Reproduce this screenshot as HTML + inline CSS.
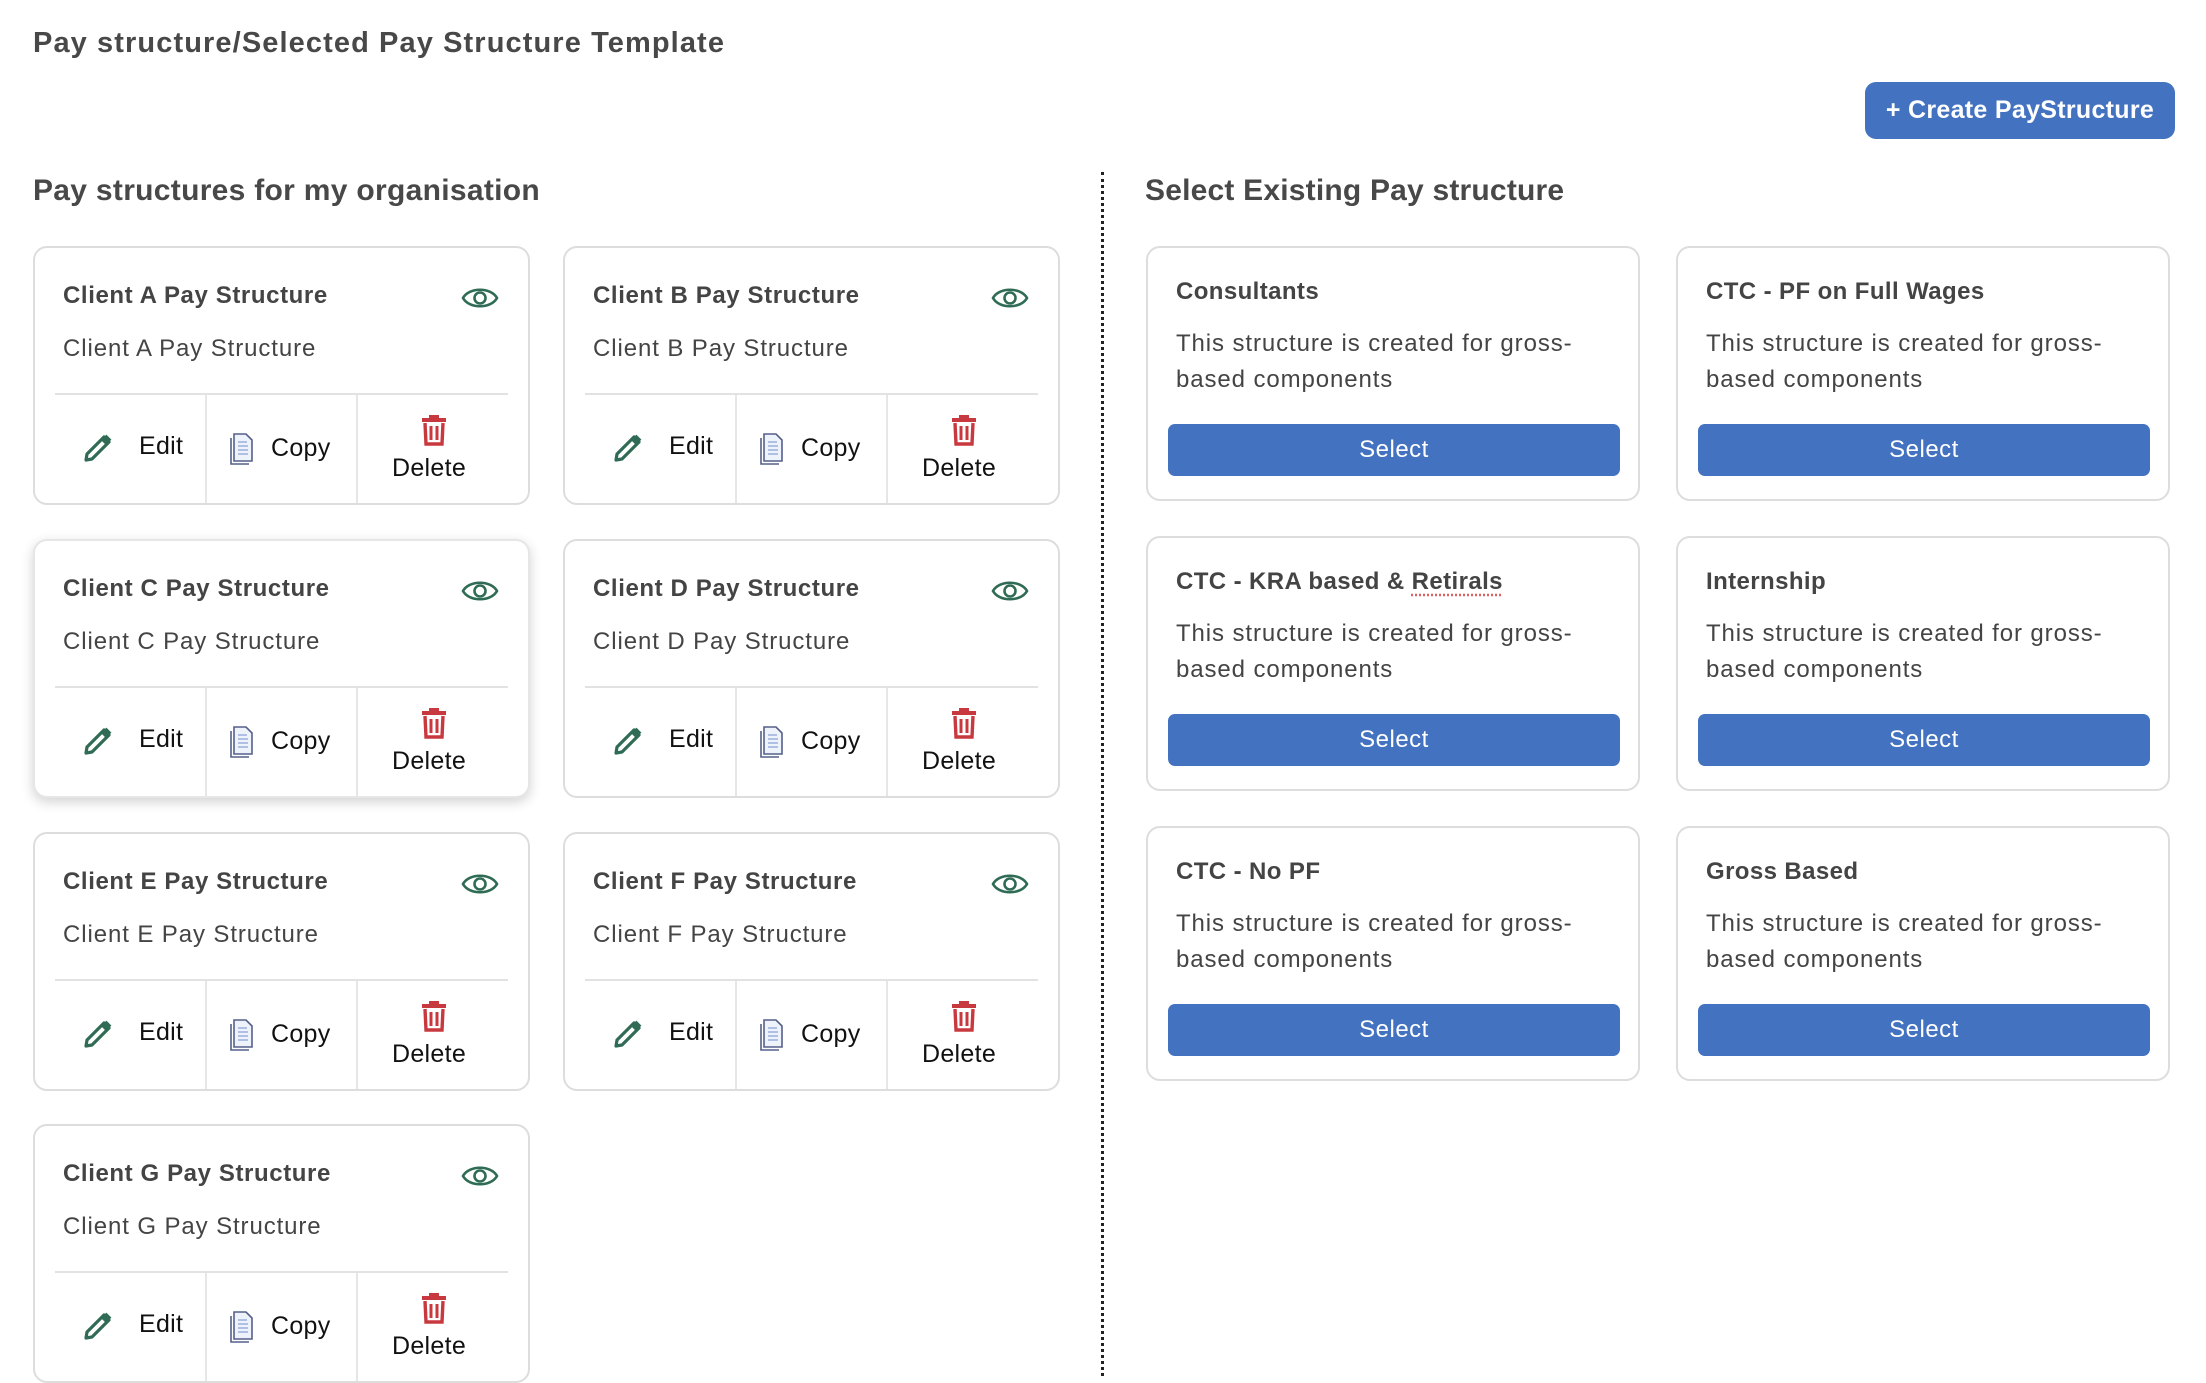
<!DOCTYPE html>
<html><head><meta charset="utf-8"><style>
*{box-sizing:border-box;margin:0;padding:0}
body{width:2206px;height:1376px;overflow:hidden;background:#fff;font-family:"Liberation Sans",sans-serif;position:relative;color:#444}
.h{position:absolute;font-weight:bold;color:#484848}
.btn{position:absolute;left:1865px;top:82px;width:310px;height:57px;background:#4272c0;border-radius:11px;color:#fff;font-size:25px;font-weight:bold;display:flex;align-items:center;justify-content:center;letter-spacing:0.3px}
.vl{position:absolute;left:1101px;top:172px;height:1204px;border-left:3px dotted #222}
.card{position:absolute;width:497px;height:259px;border:2px solid #ddd;border-radius:14px;background:#fff}
.card.sh{box-shadow:0 4px 12px rgba(0,0,0,.18);border-color:#e6e6e6}
.ct{position:absolute;left:28px;top:34px;font-size:24px;font-weight:bold;color:#444;letter-spacing:0.6px}
.cs{position:absolute;left:28px;top:87px;font-size:24px;color:#444;letter-spacing:0.9px}
.eye{position:absolute;left:426px;top:36px}
.div{position:absolute;left:20px;right:20px;top:145px;border-top:2px solid #e2e2e2}
.c1,.c2{position:absolute;top:147px;bottom:0;border-left:2px solid #e6e6e6}
.c1{left:170px}.c2{left:321px}
.act{position:absolute;font-size:25px;color:#111;letter-spacing:0.3px}
.rc{position:absolute;width:494px;height:255px;border:2px solid #ddd;border-radius:14px;background:#fff}
.rt{position:absolute;left:28px;top:30px;font-size:24px;font-weight:bold;color:#444;letter-spacing:0.4px}
.rd{position:absolute;left:28px;top:78px;font-size:24px;line-height:36px;color:#444;width:430px;letter-spacing:0.9px}
.sel{position:absolute;left:20px;top:176px;width:452px;height:52px;background:#4272c0;border-radius:7px;color:#fff;font-size:24px;display:flex;align-items:center;justify-content:center;letter-spacing:0.5px}
</style></head><body>
<div class="h" style="left:33px;top:27px;font-size:29px;letter-spacing:1.1px">Pay structure/Selected Pay Structure Template</div>
<div class="btn">+ Create PayStructure</div>
<div class="h" style="left:33px;top:174px;font-size:30px;letter-spacing:0.3px">Pay structures for my organisation</div>
<div class="h" style="left:1145px;top:174px;font-size:30px;letter-spacing:0.2px">Select Existing Pay structure</div>
<div class="vl"></div>

<div id="L"></div>
<script>
var L=[["A",33,246],["B",563,246],["C",33,539,1],["D",563,539],["E",33,832],["F",563,832],["G",33,1124]];
var eye='<svg width="38" height="28" viewBox="0 0 38 28"><path d="M2 14 C8 3 30 3 36 14 C30 25 8 25 2 14Z" fill="none" stroke="#2f6b55" stroke-width="2.6"/><circle cx="19" cy="14" r="5.5" fill="none" stroke="#2f6b55" stroke-width="2.6"/></svg>';
var pen='<svg width="32" height="32" viewBox="0 0 32 32"><path d="M4 28 L5 22 L22 5 L27 10 L10 27 Z" fill="none" stroke="#2f6b55" stroke-width="3.2" stroke-linejoin="round"/><path d="M20 7 L25 12" stroke="#2f6b55" stroke-width="3"/><path d="M23 4 L28 9" stroke="#2f6b55" stroke-width="4"/></svg>';
var cp='<svg width="28" height="34" viewBox="0 0 28 34"><path d="M4 6 L4 32 L22 32" fill="none" stroke="#55608a" stroke-width="1.6"/><path d="M7 2 L19 2 L25 8 L25 29 L7 29 Z" fill="#eef2fb" stroke="#55608a" stroke-width="1.6"/><path d="M11 10h9M11 14h10M11 18h10M11 22h10" stroke="#9bb0dc" stroke-width="1.4"/></svg>';
var tr='<svg width="28" height="32" viewBox="0 0 28 32"><rect x="9" y="1" width="10" height="4" fill="#c8393f"/><rect x="2" y="4" width="24" height="4" fill="#c8393f"/><path d="M5 9 L6 30 L22 30 L23 9" fill="none" stroke="#c8393f" stroke-width="3.4"/><path d="M11 12v14M17 12v14" stroke="#c8393f" stroke-width="3"/></svg>';
var h='';
L.forEach(function(c){
h+='<div class="card'+(c[3]?' sh':'')+'" style="left:'+c[1]+'px;top:'+c[2]+'px"><div class="ct">Client '+c[0]+' Pay Structure</div><div class="eye">'+eye+'</div><div class="cs">Client '+c[0]+' Pay Structure</div><div class="div"></div><div class="c1"></div><div class="c2"></div>'+
'<div style="position:absolute;left:47px;top:184px">'+pen+'</div><div class="act" style="left:104px;top:184px">Edit</div>'+
'<div style="position:absolute;left:192px;top:184px">'+cp+'</div><div class="act" style="left:236px;top:186px">Copy</div>'+
'<div style="position:absolute;left:385px;top:166px">'+tr+'</div><div class="act" style="left:357px;top:206px">Delete</div></div>';
});
var R=[["Consultants",1146,246],["CTC - PF on Full Wages",1676,246],["CTC - KRA based &amp; <span style=\"text-decoration:underline dotted #e06060;text-underline-offset:5px\">Retirals</span>",1146,536],["Internship",1676,536],["CTC - No PF",1146,826],["Gross Based",1676,826]];
R.forEach(function(c){
h+='<div class="rc" style="left:'+c[1]+'px;top:'+c[2]+'px"><div class="rt">'+c[0]+'</div><div class="rd">This structure is created for gross-based components</div><div class="sel">Select</div></div>';
});
document.getElementById('L').innerHTML=h;
</script>
</body></html>
